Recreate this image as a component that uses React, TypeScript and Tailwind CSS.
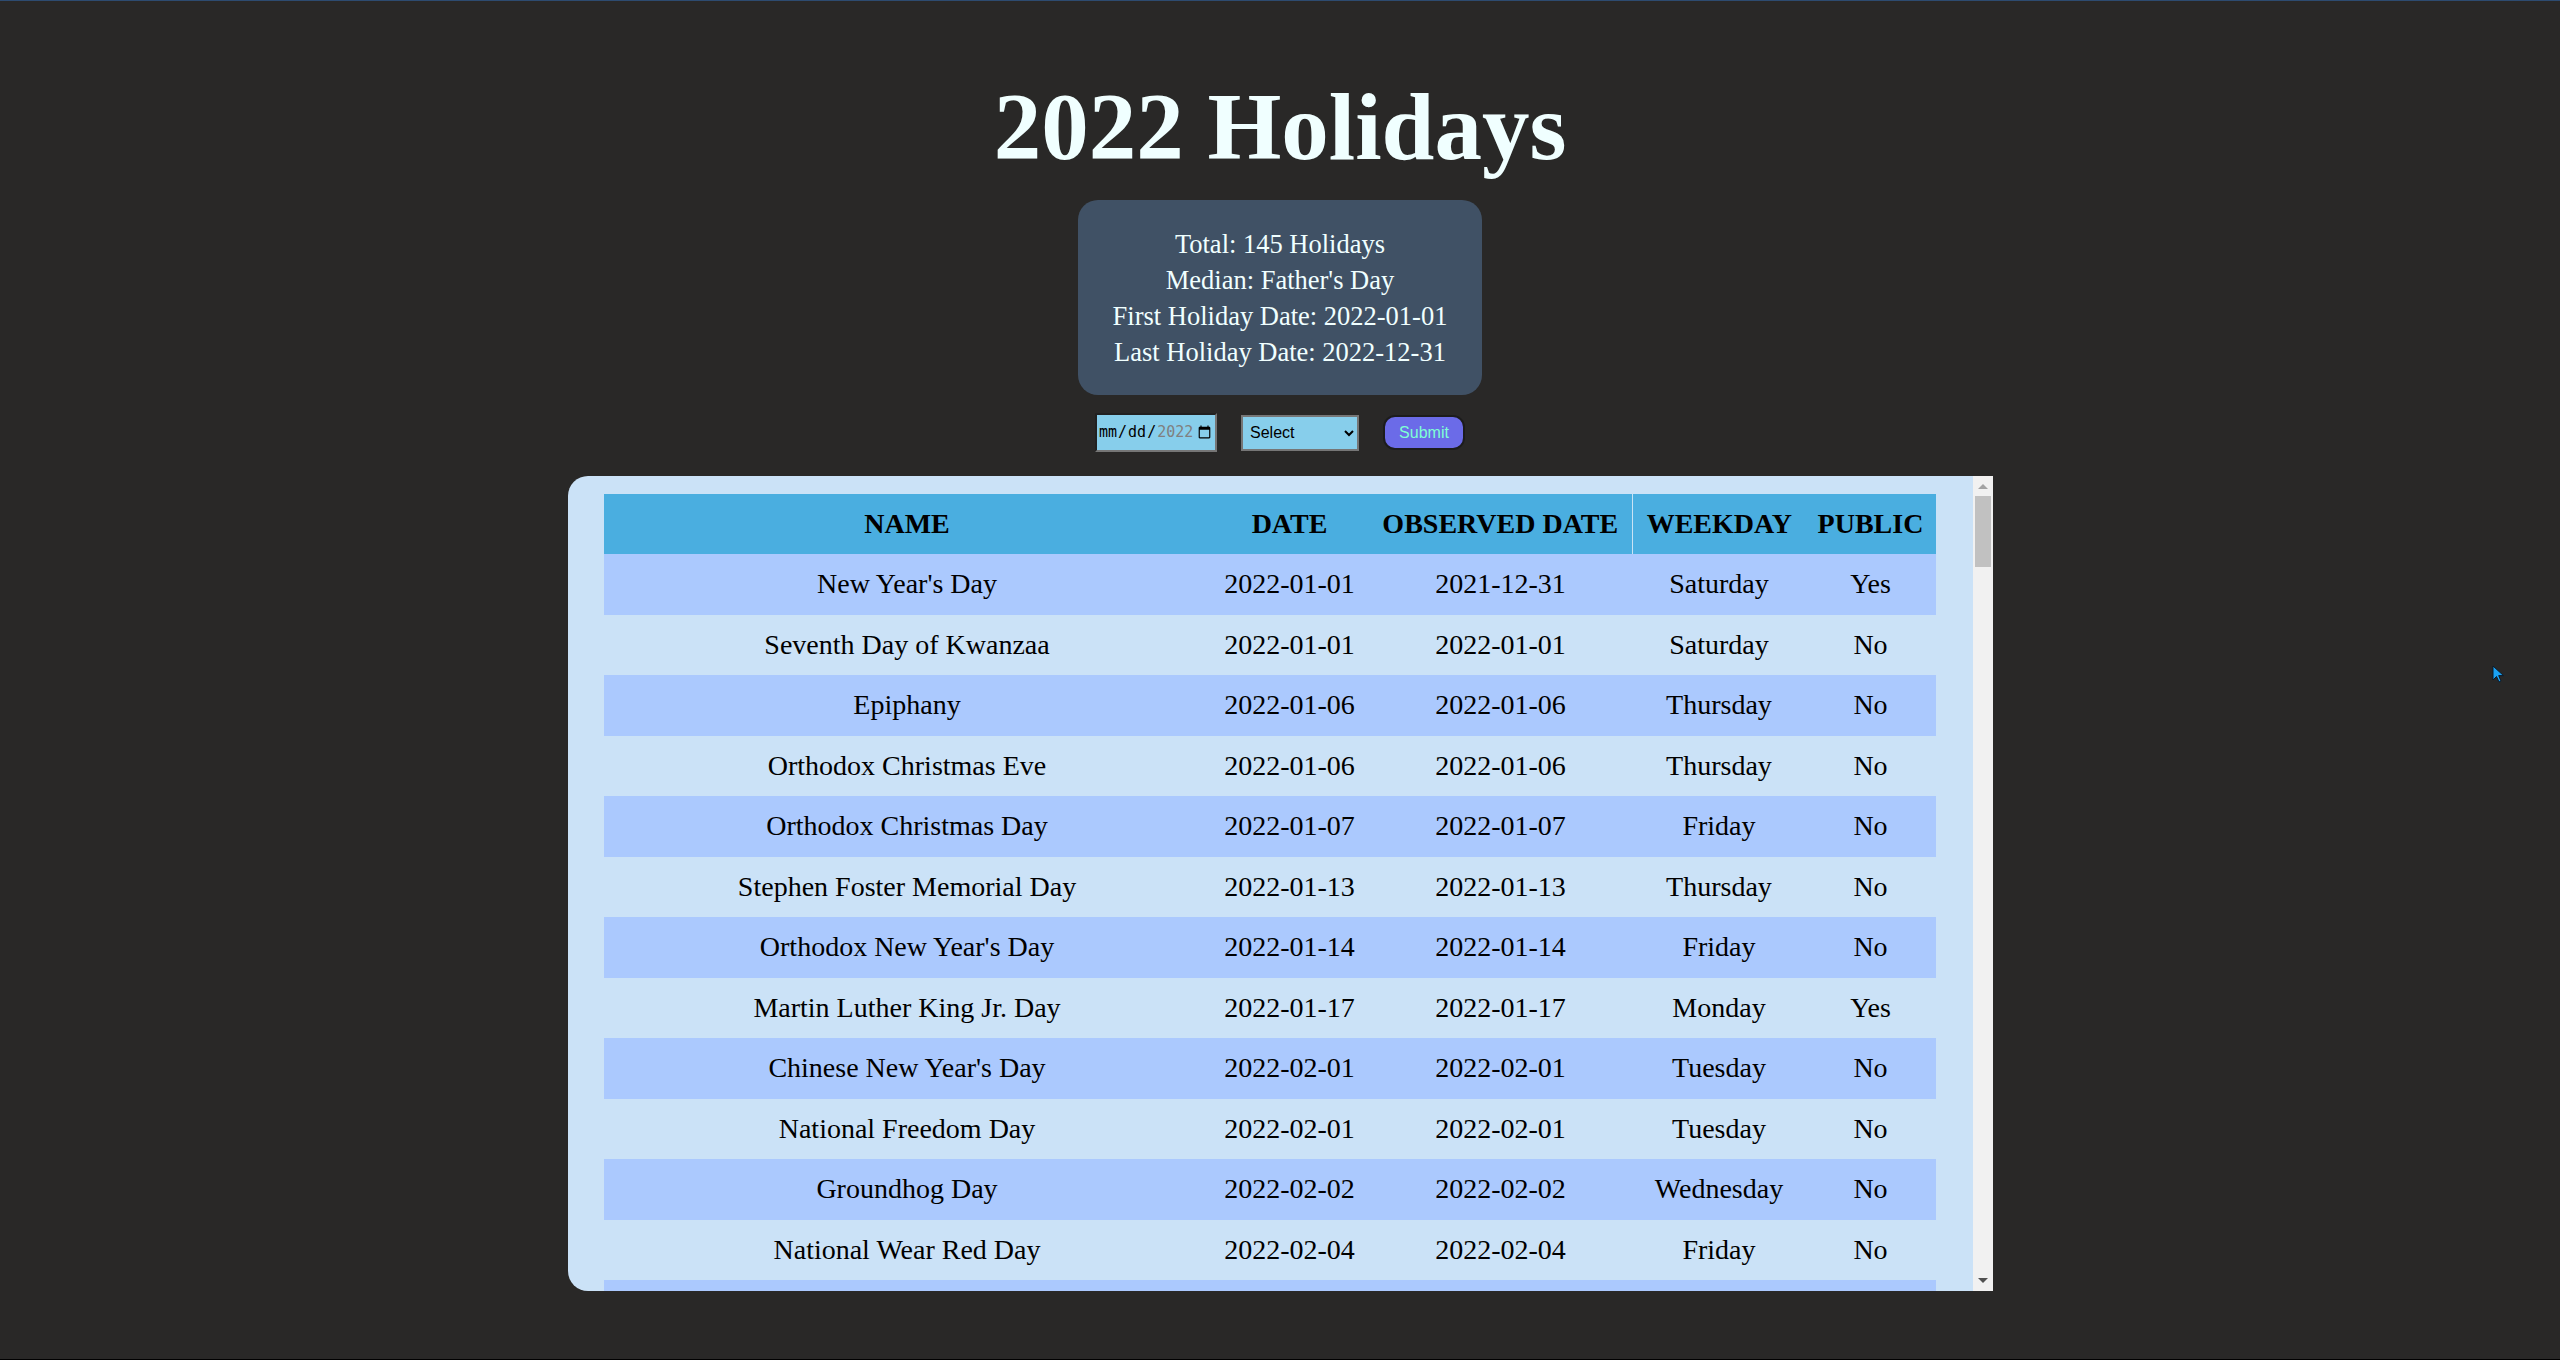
import React from "react";

interface Holiday {
  name: string;
  date: string;
  observed: string;
  weekday: string;
  isPublic: boolean;
}

const holidays: Holiday[] = [
  { name: "New Year's Day", date: "2022-01-01", observed: "2021-12-31", weekday: "Saturday", isPublic: true },
  { name: "Seventh Day of Kwanzaa", date: "2022-01-01", observed: "2022-01-01", weekday: "Saturday", isPublic: false },
  { name: "Epiphany", date: "2022-01-06", observed: "2022-01-06", weekday: "Thursday", isPublic: false },
  { name: "Orthodox Christmas Eve", date: "2022-01-06", observed: "2022-01-06", weekday: "Thursday", isPublic: false },
  { name: "Orthodox Christmas Day", date: "2022-01-07", observed: "2022-01-07", weekday: "Friday", isPublic: false },
  { name: "Stephen Foster Memorial Day", date: "2022-01-13", observed: "2022-01-13", weekday: "Thursday", isPublic: false },
  { name: "Orthodox New Year's Day", date: "2022-01-14", observed: "2022-01-14", weekday: "Friday", isPublic: false },
  { name: "Martin Luther King Jr. Day", date: "2022-01-17", observed: "2022-01-17", weekday: "Monday", isPublic: true },
  { name: "Chinese New Year's Day", date: "2022-02-01", observed: "2022-02-01", weekday: "Tuesday", isPublic: false },
  { name: "National Freedom Day", date: "2022-02-01", observed: "2022-02-01", weekday: "Tuesday", isPublic: false },
  { name: "Groundhog Day", date: "2022-02-02", observed: "2022-02-02", weekday: "Wednesday", isPublic: false },
  { name: "National Wear Red Day", date: "2022-02-04", observed: "2022-02-04", weekday: "Friday", isPublic: false },
  { name: "Lincoln's Birthday", date: "2022-02-12", observed: "2022-02-12", weekday: "Saturday", isPublic: false },
];

const stats = [
  "Total: 145 Holidays",
  "Median: Father's Day",
  "First Holiday Date: 2022-01-01",
  "Last Holiday Date: 2022-12-31",
];

export default function App() {
  return (
    <div className="relative h-[1360px] overflow-hidden border-t border-b border-t-[#2d4b70] border-b-black bg-[#292827] font-['Liberation_Serif',serif]">
      <div className="flex flex-col items-center pt-[71px]">
        {/* Title */}
        <h1 className="text-[95px] font-bold leading-[110px] text-[#f0ffff]">
          2022 Holidays
        </h1>

        {/* Summary box */}
        <div className="mt-[18px] rounded-[20px] bg-[#405165] px-[35px] pt-[26px] pb-[25px] text-center text-[26.5px] leading-[36px] text-[#f0ffff]">
          {stats.map((line) => (
            <p key={line}>{line}</p>
          ))}
        </div>

        {/* Filters */}
        <div className="mt-[18px] flex items-center gap-[24px]">
          <input
            type="date"
            min="2022-01-01"
            max="2022-12-31"
            className="h-[39px] w-[122px] border-2 border-[#767676] bg-[#87ceeb] px-[1px] font-['DejaVu_Sans_Mono',monospace] text-[15px] text-black [border-style:inset]"
          />
          <select className="h-[36px] w-[118px] border-2 border-[#767676] bg-[#87ceeb] pl-[3px] font-['Liberation_Sans',sans-serif] text-[16px] text-black">
            <option>Select</option>
            <option>Public</option>
            <option>Not Public</option>
          </select>
          <button className="h-[35px] w-[82px] rounded-[12px] border-2 border-[#1c1c1c] bg-[#6b6be8] font-['Liberation_Sans',sans-serif] text-[16px] text-[#7fffd4]">
            Submit
          </button>
        </div>

        {/* Table panel */}
        <div className="mt-[24px] flex h-[815px] w-[1425px] overflow-hidden rounded-l-[20px] bg-[#cbe2f7]">
          <div className="flex-1 overflow-hidden px-[36px] pt-[18px]">
            <table className="w-[1332px] table-fixed border-collapse text-[28px] text-black">
              <colgroup>
                <col className="w-[607px]" />
                <col className="w-[158px]" />
                <col className="w-[264px]" />
                <col className="w-[173px]" />
                <col className="w-[130px]" />
              </colgroup>
              <thead>
                <tr className="h-[60px] bg-[#4aaee0]">
                  <th className="p-0 text-center font-bold">NAME</th>
                  <th className="p-0 text-center font-bold">DATE</th>
                  <th className="border-r border-r-[#c9e3f5] p-0 text-center font-bold">OBSERVED DATE</th>
                  <th className="p-0 text-center font-bold">WEEKDAY</th>
                  <th className="p-0 text-center font-bold">PUBLIC</th>
                </tr>
              </thead>
              <tbody>
                {holidays.map((h, i) => (
                  <tr
                    key={h.name + h.date}
                    className={`h-[60.5px] ${i % 2 === 0 ? "bg-[#abc9fe]" : "bg-transparent"}`}
                  >
                    <td className="p-0 text-center">{h.name}</td>
                    <td className="p-0 text-center">{h.date}</td>
                    <td className="p-0 text-center">{h.observed}</td>
                    <td className="p-0 text-center">{h.weekday}</td>
                    <td className="p-0 text-center">{h.isPublic ? "Yes" : "No"}</td>
                  </tr>
                ))}
              </tbody>
            </table>
          </div>

          {/* Scrollbar */}
          <div className="flex w-[20px] flex-col bg-[#f1f1f1]">
            <div className="flex h-[20px] items-center justify-center">
              <svg width="10" height="5" viewBox="0 0 10 5">
                <polygon points="5,0 10,5 0,5" fill="#a3a3a3" />
              </svg>
            </div>
            <div className="mx-[2px] h-[71px] bg-[#c1c1c1]"></div>
            <div className="flex-1"></div>
            <div className="flex h-[22px] items-center justify-center">
              <svg width="10" height="5" viewBox="0 0 10 5">
                <polygon points="0,0 10,0 5,5" fill="#505050" />
              </svg>
            </div>
          </div>
        </div>
      </div>

      {/* Mouse pointer */}
      <svg
        className="absolute left-[2492px] top-[664px]"
        width="14"
        height="20"
        viewBox="0 0 14 20"
      >
        <path
          d="M1 1 L1 15 L4.5 11.5 L7 17 L9 16 L6.7 10.6 L11.5 10.6 Z"
          fill="#1aa3f5"
          stroke="#0a1a2a"
          strokeWidth="1"
        />
      </svg>
    </div>
  );
}
